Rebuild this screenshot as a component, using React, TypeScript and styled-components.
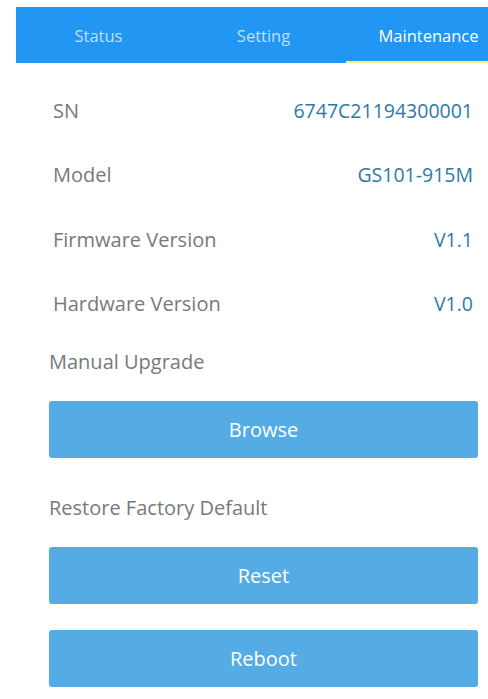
import { useState } from "react";
import styled, { createGlobalStyle } from "styled-components";

const GlobalStyle = createGlobalStyle`
  body {
    margin: 0;
    background: #ffffff;
    overflow: hidden;
    font-family: "Open Sans", "Liberation Sans", sans-serif;
  }
`;

const Page = styled.div`
  width: 488px;
  height: 699px;
  overflow: hidden;
  padding-top: 7px;
  box-sizing: border-box;
`;

const TabBar = styled.div`
  margin-left: 16px;
  width: 495px;
  height: 56px;
  background: #2196f3;
  display: grid;
  grid-template-columns: repeat(3, 1fr);
`;

const Tab = styled.div<{ $active?: boolean }>`
  display: flex;
  align-items: center;
  justify-content: center;
  font-size: 16.5px;
  color: ${(p) => (p.$active ? "#ffffff" : "rgba(255,255,255,0.72)")};
  box-sizing: border-box;
  padding-top: 2px;
  border-bottom: 2px solid ${(p) => (p.$active ? "#fdf07a" : "transparent")};
`;

const InfoList = styled.div`
  margin-top: 15px;
  padding: 0 15px 0 53px;
  display: flex;
  flex-direction: column;
`;

const InfoRow = styled.div`
  height: 64.5px;
  display: flex;
  align-items: center;
  justify-content: space-between;
  font-size: 20px;
`;

const Label = styled.span`
  color: #757a7e;
`;

const Value = styled.span`
  color: #2f7aa5;
  font-size: 19.5px;
`;

const Section = styled.div`
  padding: 0 10px 0 49px;
  display: flex;
  flex-direction: column;
`;

const SectionTitle = styled.div<{ $top: number }>`
  margin-top: ${(p) => p.$top}px;
  margin-bottom: 26px;
  height: 26px;
  line-height: 26px;
  font-size: 20px;
  color: #757a7e;
`;

const ActionButton = styled.button`
  height: 57px;
  width: 100%;
  border: none;
  border-radius: 3px;
  background: #55ace4;
  color: #ffffff;
  font-family: inherit;
  font-size: 20px;
  cursor: pointer;
  & + & {
    margin-top: 26px;
  }
`;

const tabs = ["Status", "Setting", "Maintenance"];

const info = [
  { label: "SN", value: "6747C21194300001" },
  { label: "Model", value: "GS101-915M" },
  { label: "Firmware Version", value: "V1.1" },
  { label: "Hardware Version", value: "V1.0" },
];

export default function App() {
  const [active, setActive] = useState(2);
  return (
    <Page>
      <GlobalStyle />
      <TabBar>
        {tabs.map((t, i) => (
          <Tab key={t} $active={i === active} onClick={() => setActive(i)}>
            {t}
          </Tab>
        ))}
      </TabBar>
      <InfoList>
        {info.map((row) => (
          <InfoRow key={row.label}>
            <Label>{row.label}</Label>
            <Value>{row.value}</Value>
          </InfoRow>
        ))}
      </InfoList>
      <Section>
        <SectionTitle $top={13}>Manual Upgrade</SectionTitle>
        <ActionButton>Browse</ActionButton>
        <SectionTitle $top={37}>Restore Factory Default</SectionTitle>
        <ActionButton>Reset</ActionButton>
        <ActionButton>Reboot</ActionButton>
      </Section>
    </Page>
  );
}
